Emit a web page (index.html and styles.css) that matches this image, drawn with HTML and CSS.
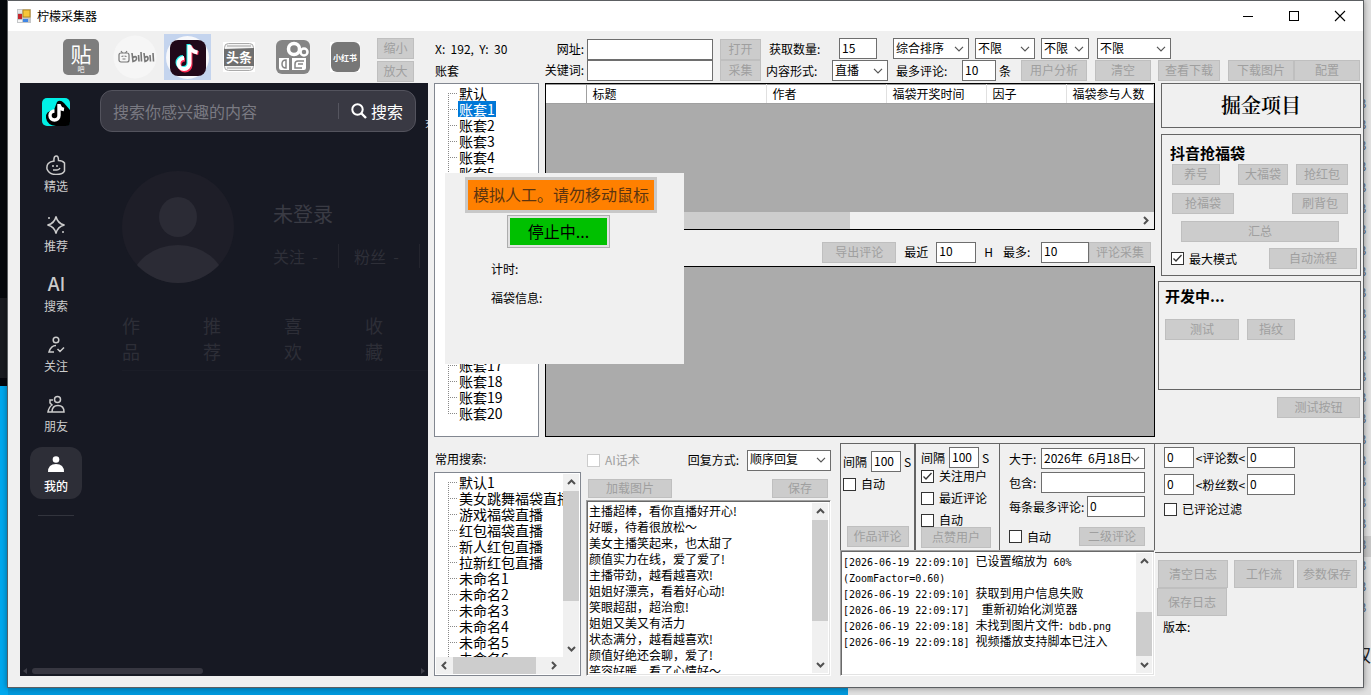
FILE: index.html
```html
<!DOCTYPE html>
<html lang="zh-CN">
<head>
<meta charset="utf-8">
<title>柠檬采集器</title>
<link rel="stylesheet" href="styles.css">
</head>
<body>
<div class="desktop">
  <div class="backdrop" aria-hidden="true">
    <div class="backdrop-list"><span>B</span><span>B</span><span>B</span><span>B</span><span>B</span><span>B</span><span>B</span><span>B</span><span>B</span><span>B</span><span>B</span><span>B</span><span>B</span><span>B</span><span>B</span><span>B</span><span>B</span><span>B</span><span>B</span><span>B</span><span>B</span><span class="picked">B</span><span>B</span><span>B</span><span>B</span></div>
    <span class="backdrop-tail">权</span>
  </div>
  <div class="window">
    <header class="titlebar">
      <svg class="app-icon" width="14" height="14" viewBox="0 0 14 14"><rect x="0" y="0" width="14" height="14" fill="#c4c6c8"/><rect x="6" y="1" width="7" height="7" fill="#f6c63a" stroke="#b98a1a" stroke-width="1"/><rect x="1" y="5" width="4" height="5" fill="#c5262c"/><rect x="6" y="10" width="5" height="3" fill="#3f86e6"/><rect x="1" y="1" width="4" height="3" fill="#e6e6e6"/><rect x="1" y="11" width="4" height="2" fill="#f5f5f5"/></svg>
      <h1 class="title">柠檬采集器</h1>
      <div class="winctl">
        <button aria-label="最小化"><svg width="12" height="12"><path d="M1 6.500h10" stroke="#000"/></svg></button>
        <button aria-label="最大化"><svg width="12" height="12"><rect x="1.500" y="1.500" width="9" height="9" fill="none" stroke="#000"/></svg></button>
        <button aria-label="关闭"><svg width="12" height="12"><path d="M1 1l10 10M11 1L1 11" stroke="#000" stroke-width="1.100"/></svg></button>
      </div>
    </header>
    <div class="client">
      <section class="left">
        <div class="sites">
          <svg class="site-tieba" width="36" height="36" viewBox="0 0 36 36"><rect width="36" height="36" rx="5" fill="#7d7d7d"/><text x="18" y="23" font-size="21" text-anchor="middle" fill="#fff">贴</text><text x="18" y="33" font-size="7" text-anchor="middle" fill="#fff">吧</text></svg>
          <svg class="site-bili" width="44" height="44" viewBox="0 0 44 44"><circle cx="22" cy="22" r="21.500" fill="#f6f6f6"/><g fill="none" stroke="#777" stroke-width="1.200"><rect x="6" y="18" width="10" height="9" rx="2"/><path d="M8 16l1.500 2M14 16l-1.500 2M8.500 21.500l2-.5M13.500 21.500l-2-.5M9.500 24h3"/><path d="M19 18l1 8.500q4-1 3.500-3.500t-3.500-.5M25.500 20l.5 6.500M28 17l.5 9.500M31 18l1 8.500q3.500-1 3-3.500t-3-.5M37 20l.5 6.500M40 18l.5 8.500" stroke-width="1.600"/></g></svg>
          <button class="site-active" aria-label="抖音"><svg width="43" height="43" viewBox="0 0 43 43"><circle cx="21.500" cy="21.500" r="21.500" fill="#f7f8fb"/><rect x="4" y="4" width="36" height="36" rx="8" fill="#21091a"/><g fill="none" stroke-width="4"><path d="M22.500 8v18.500a5.500 5.500 0 1 1-5.500-5.500M22.500 10q2 5 8 6" stroke="#25f4ee"/><path d="M24.500 10v19a5.500 5.500 0 1 1-5.500-5.500M24.500 11q2 5 8 6" stroke="#fe2c55"/><path d="M23.500 9v18.500a5.500 5.500 0 1 1-5.500-5.500M23.500 10.500q2 5 8 6" stroke="#fff"/></g></svg></button>
          <svg class="site-toutiao" width="32" height="30" viewBox="0 0 32 30"><rect width="32" height="30" fill="#fff"/><rect x="1.500" y="1.500" width="29" height="27" rx="4" fill="#f4f4f4" stroke="#aaa"/><path d="M4 4h24M4 26h24" stroke="#bbb" stroke-width="1.500"/><path d="M1 7l30-1v18H1z" fill="#6f6f6f"/><text x="16" y="20" font-size="13" font-weight="700" text-anchor="middle" fill="#fff">头条</text></svg>
          <svg class="site-ks" width="36" height="36" viewBox="0 0 36 36"><rect x="1" y="1" width="34" height="34" rx="6" fill="#858585"/><g fill="none" stroke="#fff"><circle cx="19" cy="10" r="5.500" stroke-width="3.500"/><circle cx="29" cy="13" r="3.500" stroke-width="2.500"/></g><path d="M4 19h10v12H6q-2 0-2-2zM17 19h14v10q0 2-2 2H17z" fill="#fff"/><path d="M11 21q-4 0-4 4t4 4zM29 22h-6q-3 0-3 3v4h7M23 25h5" fill="none" stroke="#858585" stroke-width="1.500"/></svg>
          <svg class="site-xhs" width="30" height="30" viewBox="0 0 30 30"><rect width="30" height="30" fill="#fff"/><rect x="1" width="29" height="30" rx="6" fill="#777"/><text x="15" y="19" font-size="8" font-weight="700" text-anchor="middle" fill="#fff">小红书</text></svg>
          <div class="zoomers"><button class="btn" disabled>缩小</button><button class="btn" disabled>放大</button></div>
        </div>
        <div class="browser">
          <nav class="side">
            <svg class="dy-logo" width="28" height="28" viewBox="0 0 28 28"><rect width="28" height="28" rx="5" fill="#00f0e6"/><path d="M15 4q3-3 7 1l6 7v12q0 4-4 4H14q-9-1-10-8t8-8z" fill="#000"/><path d="M17 6v11.500a4.500 4.500 0 1 1-4.500-4.500M17 7q1 4 5 4.500" fill="none" stroke="#fff" stroke-width="3.400"/></svg>
            <ul class="nav">
              <li><svg width="20" height="20" viewBox="0 0 20 20"><path d="M8 6q-.5-4.500 2-5t2.500 4.500q4 0 6 2.500V16q-1.500 3.500-8.500 3.500T1 14Q0 7 8 6z"/><path d="M7 10v2M11 10v2M7 15h4q2 0 3-2"/></svg>精选</li>
              <li><svg width="20" height="20" viewBox="0 0 20 20"><path d="M10 1.500q1.500 7 8.500 8.500-7 1.500-8.500 8.500Q8.500 11.500 1.500 10 8.500 8.500 10 1.500z"/><path d="M3 2v2M17 16v2"/></svg>推荐</li>
              <li><span class="ai">AI</span>搜索</li>
              <li><svg width="20" height="20" viewBox="0 0 20 20"><circle cx="10" cy="5" r="2.800"/><path d="M10 10.500q-5 0-7 6.500h5M11.500 14l2.500 2.500 4-4"/></svg>关注</li>
              <li><svg width="20" height="20" viewBox="0 0 20 20"><circle cx="11.500" cy="4.500" r="3"/><path d="M6 17q0-6.500 6-6.500t6 6.500zM7 5H4v3l2 2q-3 2-4 7h4"/></svg>朋友</li>
              <li class="on"><svg class="solid" width="20" height="20" viewBox="0 0 20 20"><circle cx="10" cy="4.500" r="3.300"/><path d="M2 17q0-8 8-8t8 8z"/></svg>我的</li>
            </ul>
            <hr class="side-line">
          </nav>
          <div class="page">
            <div class="searchrow">
              <form class="search"><input type="text" aria-label="搜索" placeholder="搜索你感兴趣的内容"><button type="button"><svg width="16" height="16" viewBox="0 0 16 16"><circle cx="6.500" cy="6.500" r="5.200" fill="none" stroke="#fff" stroke-width="2"/><path d="M10.500 10.500l4.500 4.500" stroke="#fff" stroke-width="2.400"/></svg>搜索</button></form>
              <span class="cut">充</span>
            </div>
            <div class="profile">
              <svg width="112" height="112" viewBox="0 0 112 112"><defs><clipPath id="face"><circle cx="56" cy="56" r="56"/></clipPath></defs><g clip-path="url(#face)"><rect width="112" height="112" fill="#1e1e28"/><ellipse cx="56" cy="46" rx="19" ry="20" fill="#2b2b35"/><ellipse cx="56" cy="113" rx="47" ry="39" fill="#2b2b35"/></g></svg>
              <div class="who"><div class="name">未登录</div><div class="stats"><span>关注&nbsp; -</span><span>粉丝&nbsp; -</span></div></div>
            </div>
            <div class="tabs"><span>作品</span><span>推荐</span><span>喜欢</span><span>收藏</span></div>
          </div>
          <div class="darkbar"><svg width="4" height="8"><path d="M4 1v6L0 4z" fill="#3e3e48"/></svg><i></i><svg width="4" height="8"><path d="M0 1v6l4-3z" fill="#3e3e48"/></svg></div>
        </div>
      </section>

      <section class="main">
        <div class="tools">
          <div class="stack tools-pos"><span>X:&nbsp; 192,&nbsp; Y:&nbsp; 30</span><span>账套</span></div>
          <div class="stack tools-lab"><label for="url">网址:</label><label for="kw">关键词:</label></div>
          <div class="stack tools-in"><input id="url" type="text"><input id="kw" type="text"></div>
          <div class="stack tools-go"><button class="btn" disabled>打开</button><button class="btn" disabled>采集</button></div>
          <div class="opts">
            <div class="line">
              <label class="w70 ml3" for="cnt">获取数量:</label><input id="cnt" class="w38" type="text" value="15">
              <select class="w76 ml16" aria-label="排序"><option>综合排序</option></select>
              <select class="w60 ml6" aria-label="时间"><option>不限</option></select>
              <select class="w48 ml6" aria-label="时长"><option>不限</option></select>
              <select class="w74 ml8" aria-label="范围"><option>不限</option></select>
            </div>
            <div class="line second-line">
              <label class="w66" for="kind">内容形式:</label><select id="kind" class="w56"><option>直播</option></select>
              <label class="w66 ml8" for="maxc">最多评论:</label><input id="maxc" class="w34" type="text" value="10"><span class="ml3">条</span>
              <button class="btn w66 ml10" disabled>用户分析</button>
              <button class="btn w56 ml8" disabled>清空</button>
              <button class="btn w62 push" disabled>查看下载</button>
              <button class="btn w66 ml8" disabled>下载图片</button>
              <button class="btn w66" disabled>配置</button>
            </div>
          </div>
        </div>

        <div class="upper">
          <ul class="tree accounts">
            <li><span>默认</span></li><li><span class="sel">账套1</span></li><li><span>账套2</span></li><li><span>账套3</span></li><li><span>账套4</span></li><li><span>账套5</span></li><li class="covered"></li><li><span>账套17</span></li><li><span>账套18</span></li><li><span>账套19</span></li><li><span>账套20</span></li>
          </ul>
          <div class="grids">
            <div class="gridview first">
              <table><colgroup><col class="c1"><col class="c2"><col class="c3"><col class="c4"><col class="c5"><col></colgroup><thead><tr><th></th><th>标题</th><th>作者</th><th>福袋开奖时间</th><th>因子</th><th>福袋参与人数</th></tr></thead></table>
              <div class="hbar"><svg class="arr" viewBox="0 0 9 9"><path d="M6 1L2.500 4.500 6 8"/></svg><div class="rail"><i class="thumb-half"></i></div><svg class="arr" viewBox="0 0 9 9"><path d="M3 1l3.500 3.500L3 8"/></svg></div>
            </div>
            <div class="between">
              <button class="btn w74" disabled>导出评论</button>
              <label class="ml8 w32" for="hrs">最近</label><input id="hrs" class="w40" type="text" value="10"><span class="ml8">H</span>
              <label class="ml10 w38" for="most">最多:</label><input id="most" class="w48" type="text" value="10"><button class="btn w62" disabled>评论采集</button>
            </div>
            <div class="gridview second"></div>
          </div>
          <aside class="right">
            <div class="box banner">掘金项目</div>
            <div class="box bags">
              <h2>抖音抢福袋</h2>
              <div class="spread"><button class="btn w48" disabled>养号</button><button class="btn w50 push" disabled>大福袋</button><button class="btn w52 ml8" disabled>抢红包</button></div>
              <div class="spread"><button class="btn w62" disabled>抢福袋</button><button class="btn w56 push" disabled>刷背包</button></div>
              <button class="btn total" disabled>汇总</button>
              <div class="mode"><label class="chk"><input type="checkbox" checked>最大模式</label><button class="btn w88" disabled>自动流程</button></div>
            </div>
            <div class="box dev">
              <h2>开发中...</h2>
              <div class="spread"><button class="btn w74" disabled>测试</button><button class="btn w48 ml8" disabled>指纹</button></div>
            </div>
            <button class="btn testbtn" disabled>测试按钮</button>
          </aside>
        </div>

        <div class="lower">
          <div class="common">
            <div class="cap">常用搜索:</div>
            <div class="listbox">
              <div class="listrow">
                <ul class="tree"><li><span>默认1</span></li><li><span>美女跳舞福袋直播</span></li><li><span>游戏福袋直播</span></li><li><span>红包福袋直播</span></li><li><span>新人红包直播</span></li><li><span>拉新红包直播</span></li><li><span>未命名1</span></li><li><span>未命名2</span></li><li><span>未命名3</span></li><li><span>未命名4</span></li><li><span>未命名5</span></li><li><span>未命名6</span></li></ul>
                <div class="vbar"><svg class="arr" viewBox="0 0 9 9"><path d="M1 6l3.500-3.500L8 6"/></svg><div class="rail"><i class="t73"></i></div><svg class="arr" viewBox="0 0 9 9"><path d="M1 3l3.500 3.500L8 3"/></svg></div>
              </div>
              <div class="hbar"><svg class="arr" viewBox="0 0 9 9"><path d="M6 1L2.500 4.500 6 8"/></svg><div class="rail"><i class="thumb-most"></i></div><svg class="arr" viewBox="0 0 9 9"><path d="M3 1l3.500 3.500L3 8"/></svg><span class="corner"></span></div>
            </div>
          </div>

          <div class="reply">
            <div class="line replytop"><label class="chk off"><input type="checkbox" disabled>AI话术</label><label class="push" for="how">回复方式:</label><select id="how" class="w84 ml8"><option>顺序回复</option></select></div>
            <div class="replybtns"><button class="btn w84" disabled>加载图片</button><button class="btn w56" disabled>保存</button></div>
            <div class="sunken grow">
              <textarea aria-label="回复内容">主播超棒，看你直播好开心!
好暖，待着很放松～
美女主播笑起来，也太甜了
颜值实力在线，爱了爱了!
主播带劲，越看越喜欢!
姐姐好漂亮，看着好心动!
笑眼超甜，超治愈!
姐姐又美又有活力
状态满分，越看越喜欢!
颜值好绝还会聊，爱了!
笑容好暖，看了心情好～</textarea>
              <div class="vbar"><svg class="arr" viewBox="0 0 9 9"><path d="M1 6l3.500-3.500L8 6"/></svg><div class="rail"><i class="t73"></i></div><svg class="arr" viewBox="0 0 9 9"><path d="M1 3l3.500 3.500L8 3"/></svg></div>
            </div>
          </div>

          <div class="tasks">
            <div class="panels">
              <div class="panel p1">
                <div class="line"><label class="w28" for="g1">间隔</label><input id="g1" class="w30" type="text" value="100"><span class="ml3">S</span></div>
                <label class="chk"><input type="checkbox">自动</label>
                <button class="btn w62 bottom" disabled>作品评论</button>
              </div>
              <div class="panel p2">
                <div class="line"><label class="w28" for="g2">间隔</label><input id="g2" class="w30" type="text" value="100"><span class="ml3">S</span></div>
                <label class="chk"><input type="checkbox" checked>关注用户</label>
                <label class="chk"><input type="checkbox">最近评论</label>
                <label class="chk"><input type="checkbox">自动</label>
                <button class="btn w70" disabled>点赞用户</button>
              </div>
              <div class="panel p3">
                <div class="line"><label class="w32" for="since">大于:</label><select id="since" class="fill"><option>2026年&nbsp; 6月18日</option></select></div>
                <div class="line"><label class="w32" for="has">包含:</label><input id="has" class="fill" type="text"></div>
                <div class="line"><label class="w78" for="each">每条最多评论:</label><input id="each" class="fill" type="text" value="0"></div>
                <div class="line last"><label class="chk"><input type="checkbox">自动</label><button class="btn w66 push" disabled>二级评论</button></div>
              </div>
            </div>
            <div class="sunken grow">
              <div class="log" role="log">
                <p><span class="ts">[2026-06-19 22:09:10] </span>已设置缩放为<span class="ts"> 60% (ZoomFactor=0.60)</span></p>
                <p><span class="ts">[2026-06-19 22:09:10] </span>获取到用户信息失败</p>
                <p><span class="ts">[2026-06-19 22:09:17]&nbsp; </span>重新初始化浏览器</p>
                <p><span class="ts">[2026-06-19 22:09:18] </span>未找到图片文件:<span class="ts"> bdb.png</span></p>
                <p><span class="ts">[2026-06-19 22:09:18] </span>视频播放支持脚本已注入</p>
              </div>
              <div class="vbar"><svg class="arr" viewBox="0 0 9 9"><path d="M1 6l3.500-3.500L8 6"/></svg><div class="rail end"><i class="t50"></i></div><svg class="arr" viewBox="0 0 9 9"><path d="M1 3l3.500 3.500L8 3"/></svg></div>
            </div>
          </div>

          <div class="filters">
            <div class="filterbox">
              <div class="line"><input class="w30" aria-label="评论数下限" type="text" value="0"><span class="w53">&lt;评论数&lt;</span><input class="w48" aria-label="评论数上限" type="text" value="0"></div>
              <div class="line"><input class="w30" aria-label="粉丝数下限" type="text" value="0"><span class="w53">&lt;粉丝数&lt;</span><input class="w48" aria-label="粉丝数上限" type="text" value="0"></div>
              <label class="chk"><input type="checkbox">已评论过滤</label>
            </div>
            <div class="logbtns"><button class="btn w70" disabled>清空日志</button><button class="btn w60 ml6" disabled>工作流</button><button class="btn w60 ml3" disabled>参数保存</button></div>
            <div class="logbtns tight"><button class="btn w70" disabled>保存日志</button></div>
            <div class="version">版本:</div>
          </div>
        </div>

        <div class="popup" role="dialog" aria-label="运行状态">
          <button class="btn-warn" disabled>模拟人工。请勿移动鼠标</button>
          <button class="btn-stop">停止中...</button>
          <p>计时:</p>
          <p>福袋信息:</p>
        </div>
      </section>
    </div>
  </div>
</div>
</body>
</html>
```

FILE: styles.css
```css
* { box-sizing: border-box; }
body { margin: 0; font: 12px/16px "Noto Sans CJK SC", sans-serif; color: #000; }
button, input, select, textarea { font: inherit; color: inherit; margin: 0; border-radius: 0; }
ul, p, h1, h2 { margin: 0; padding: 0; list-style: none; font-size: inherit; font-weight: inherit; }
svg { display: block; flex: none; }
label, .line span { white-space: nowrap; }

/* desktop behind the window */
.desktop {
  position: relative; display: flex; height: 100vh; min-height: 690px; padding: 0 7px 7px; overflow: hidden;
  background:
    linear-gradient(#e0e0e0, #e0e0e0) right top / 523px 100% no-repeat,
    linear-gradient(#06090d 0 298px, #191b20 298px 378px, #04060c 378px 386px, #00a8ee 386px) left top / 8px 100% no-repeat,
    #0098dc;
}
.backdrop { position: absolute; top: 0; right: 0; bottom: 0; width: 12px; font: 12px/21px "Liberation Mono", monospace; color: #5b6f8c; overflow: hidden; }
.backdrop-list { display: flex; flex-direction: column; padding-top: 95px; }
.picked { background: #c6c6c6; }
.backdrop-tail { display: block; margin-top: 22px; margin-left: -6px; font: 18px/24px "Noto Sans CJK SC", sans-serif; color: #222; }
.window { position: relative; flex: 1; min-width: 0; display: flex; flex-direction: column; background: #f0f0f0; border: 1px solid #5c5f62; box-shadow: 0 0 6px rgba(0, 0, 0, .4); }

.titlebar { display: flex; align-items: center; height: 30px; padding-left: 9px; background: #fff; }
.title { flex: 1; margin-left: 6px; }
.winctl { display: flex; }
.winctl button { display: flex; align-items: center; justify-content: center; width: 46px; height: 29px; padding: 0; border: 0; background: none; }

.client { flex: 1; min-height: 0; display: flex; gap: 6px; padding: 0 2px 11px 12px; }
.left { flex: none; width: 408px; display: flex; flex-direction: column; }
.main { position: relative; flex: 1; min-width: 0; display: flex; flex-direction: column; }

/* shared controls */
.btn { flex: none; height: 21px; padding: 0 0 1px; border: 1px solid #bfbfbf; background: #ccc; color: #9f9f9f; line-height: 16px; white-space: nowrap; }
input[type="text"] { height: 21px; min-width: 0; padding: 0 2px 3px; border: 1px solid #6e6e6e; background: #fff; outline: 0; }
select {
  height: 21px; min-width: 0; padding: 0 0 2px 2px; border: 1px solid #6e6e6e; appearance: none; outline: 0;
  background: #fff url("data:image/svg+xml,%3Csvg xmlns='http://www.w3.org/2000/svg' width='10' height='6'%3E%3Cpath d='M1 .8l4 4 4-4' fill='none' stroke='%23555' stroke-width='1.200'/%3E%3C/svg%3E") right 4px center no-repeat;
}
.line { display: flex; align-items: center; }
.line > *, .between > * { flex: none; }
.line > .fill { flex: 1; }
.push { margin-left: auto; }
.chk { display: flex; align-items: center; gap: 5px; }
.chk input { appearance: none; width: 13px; height: 13px; border: 1px solid #333; background: #fff; }
.chk input:checked { background: #fff url("data:image/svg+xml,%3Csvg xmlns='http://www.w3.org/2000/svg' width='11' height='11'%3E%3Cpath d='M1.500 5.500l2.500 2.500 5.500-6' fill='none' stroke='%23333' stroke-width='1.300'/%3E%3C/svg%3E") center no-repeat; }
.chk.off { color: #9f9f9f; }
.chk.off input { border-color: #ccc; }

.w28 { width: 28px; } .w30 { width: 30px; } .w32 { width: 32px; } .w34 { width: 34px; } .w38 { width: 38px; } .w40 { width: 40px; }
.w48 { width: 48px; } .w50 { width: 50px; } .w52 { width: 52px; } .w53 { width: 53px; text-align: center; } .w56 { width: 56px; }
.w60 { width: 60px; } .w62 { width: 62px; } .w66 { width: 66px; } .w70 { width: 70px; } .w74 { width: 74px; } .w76 { width: 76px; }
.w78 { width: 78px; } .w84 { width: 84px; } .w88 { width: 88px; }
.ml3 { margin-left: 3px; } .ml6 { margin-left: 6px; } .ml8 { margin-left: 8px; } .ml10 { margin-left: 10px; } .ml16 { margin-left: 16px; }

/* scrollbars */
.vbar, .hbar { display: flex; flex: none; background: #f0f0f0; }
.vbar { flex-direction: column; width: 16px; }
.hbar { height: 17px; }
.rail { flex: 1; display: flex; flex-direction: inherit; }
.rail.end { justify-content: flex-end; }
.rail i { background: #cdcdcd; }
.arr { width: 17px; height: 17px; padding: 4px; fill: none; stroke: #505050; stroke-width: 2; }
.t73 { height: 74%; }
.t50 { height: 51%; }
.thumb-half { width: 50%; }
.thumb-most { width: 90%; }
.corner { width: 17px; }

/* site launcher */
.sites { display: flex; align-items: center; height: 52px; padding-left: 43px; }
.site-bili { margin-left: 14px; }
.site-active { width: 47px; height: 46px; margin-left: 7px; padding: 2px; border: 0; background: #c4d4ee; }
.site-toutiao { margin-left: 12px; }
.site-ks { margin-left: 20px; }
.site-xhs { margin-left: 19px; }
.zoomers { display: flex; flex-direction: column; gap: 2px; margin: 5px 0 0 17px; }
.zoomers .btn { width: 37px; }

/* embedded browser */
.browser { position: relative; flex: 1; min-height: 0; display: flex; background: #171923; overflow: hidden; color: #ccc; }
.side { width: 72px; flex: none; display: flex; flex-direction: column; align-items: center; padding-top: 15px; }
.nav { display: flex; flex-direction: column; gap: 8px; margin-top: 21px; }
.nav li { display: flex; flex-direction: column; align-items: center; gap: 3px; width: 52px; height: 52px; padding-top: 8px; border-radius: 12px; }
.nav svg { fill: none; stroke: #ccc; stroke-width: 1.5; }
.nav svg.solid { fill: #fff; stroke: none; }
.nav .on { background: #2d2e37; color: #fff; font-weight: 500; }
.ai { font: 500 18px/20px Inter, sans-serif; }
.side-line { width: 36px; margin: 16px 0 0; border: 0; border-top: 1px solid #32343d; }
.page { flex: 1; min-width: 0; padding: 7px 0 0 8px; }
.searchrow { display: flex; align-items: center; gap: 9px; overflow: hidden; }
.search { flex: none; display: flex; align-items: center; width: 316px; height: 42px; padding: 0 12px; border: 1px solid #53535d; border-radius: 12px; background: #393943; font-size: 16px; line-height: 24px; }
.search input[type="text"] { flex: 1; height: 24px; padding: 0; border: 0; background: none; }
.search input::placeholder { color: #7a7a82; opacity: 1; }
.search button { display: flex; align-items: center; gap: 4px; padding: 0 0 0 13px; border: 0; background: linear-gradient(#55555f, #55555f) left center / 1px 16px no-repeat; color: #fff; }
.cut { flex: none; padding-top: 24px; font-size: 10px; line-height: 12px; }
.profile { display: flex; gap: 39px; padding: 39px 0 0 22px; overflow: hidden; }
.who { flex: none; padding-top: 29px; color: #2e2f38; }
.name { font-size: 20px; line-height: 28px; color: #3a3b44; }
.stats { display: flex; gap: 15px; margin-top: 16px; font-size: 16px; line-height: 24px; }
.stats span { width: 66px; border-right: 1px solid #24252e; }
.tabs { display: flex; gap: 63px; margin: 29px 0 0 22px; padding-bottom: 6px; border-bottom: 1px solid #1b1d27; font-size: 18px; line-height: 26px; color: #2d2e37; }
.tabs span { width: 18px; }
.darkbar { position: absolute; left: 3px; right: 3px; bottom: 1px; display: flex; align-items: center; gap: 5px; }
.darkbar i { width: 171px; height: 6px; margin-right: auto; border-radius: 3px; background: #373741; }

/* toolbar */
.tools { display: flex; height: 52px; padding-top: 7px; }
.stack { display: flex; flex-direction: column; flex: none; line-height: 21px; }
.tools-pos { width: 107px; padding-left: 1px; gap: 1px; }
.tools-lab { width: 46px; padding-right: 3px; text-align: right; }
.tools-in { width: 126px; padding-top: 1px; }
.tools-go { width: 41px; margin: 1px 5px 0 7px; }
.opts { flex: 1; min-width: 0; display: flex; flex-direction: column; gap: 1px; }
.opts .line { height: 21px; }
.second-line { padding-right: 1px; }

/* upper half */
.upper { flex: 354 1 0; min-height: 0; display: flex; }
.tree { font-size: 14px; line-height: 16px; background: #fff; overflow: hidden; }
.tree li { display: flex; height: 16px; padding-left: 13px; white-space: nowrap; }
.tree li::before {
  content: ""; flex: none; width: 10px; height: 100%;
  background:
    repeating-linear-gradient(90deg, #888 0 1px, transparent 1px 2px) left center / 10px 1px no-repeat,
    repeating-linear-gradient(#888 0 1px, transparent 1px 2px) left bottom / 1px 100% no-repeat;
}
.tree li:first-child::before { background-size: 10px 1px, 1px 8px; }
.accounts li:last-child::before { background-position: left center, left top; background-size: 10px 1px, 1px 8px; }
.tree .covered { height: 176px; }
.tree span { padding: 0 1px; }
.tree .sel { background: #0078d7; color: #fff; }
.accounts { flex: none; width: 105px; padding-top: 1px; border: 1px solid #828790; }
.grids { flex: 1; min-width: 0; display: flex; flex-direction: column; margin: 0 3px 0 6px; }
.gridview { border: 1px solid #000; background: #ababab; overflow: hidden; }
.first { flex: none; height: 147px; display: flex; flex-direction: column; justify-content: space-between; }
.second { flex: 1; }
.gridview table { width: 100%; table-layout: fixed; border-collapse: collapse; border-top: 1px solid #999; background: #fff; }
.gridview th { height: 19px; padding: 0 0 0 6px; border-right: 1px solid #e0e0e0; border-bottom: 1px solid #a0a0a0; font-weight: 400; text-align: left; white-space: nowrap; }
.gridview th:first-child { border-right-color: #a0a0a0; }
.c1 { width: 40px; } .c2 { width: 180px; } .c3 { width: 120px; } .c4 { width: 100px; } .c5 { width: 80px; }
.between { flex: none; height: 36px; display: flex; align-items: center; justify-content: flex-end; padding: 8px 4px 0 0; }

.right { flex: none; width: 203px; display: flex; flex-direction: column; align-items: flex-end; }
.box { width: 200px; border: 1px solid #646464; flex: none; }
.banner { height: 45px; font: 600 20px/45px "Liberation Serif", "Noto Serif CJK SC", "Noto Sans CJK SC", serif; text-align: center; }
.bags { height: 142px; margin-top: 6px; padding: 8px 3px 0 10px; }
.box h2 { font-size: 15px; font-weight: 700; line-height: 20px; }
.bags h2 { margin: 0 0 1px -2px; }
.spread { display: flex; padding-right: 9px; }
.spread + .spread { margin-top: 8px; }
.total { display: block; width: 158px; margin: 7px 0 0 9px; }
.mode { display: flex; align-items: center; justify-content: space-between; margin-top: 6px; }
.mode .chk { margin-left: -1px; }
.dev { width: 203px; height: 109px; margin-top: 5px; padding: 4px 6px; }
.dev .spread { margin-top: 13px; }
.testbtn { width: 83px; margin: 7px 1px 0 0; }

/* lower half */
.lower { flex: 233 1 0; min-height: 0; display: flex; padding-top: 6px; }
.common { flex: none; width: 147px; display: flex; flex-direction: column; }
.cap { height: 29px; padding: 8px 1px 0; }
.listbox { flex: 1; min-height: 0; display: flex; flex-direction: column; padding: 1px; border: 1px solid #828790; background: #fff; }
.listrow { flex: 1; min-height: 0; display: flex; }
.listrow .tree { flex: 1; min-width: 0; margin-left: -1px; }
.reply { flex: none; width: 245px; display: flex; flex-direction: column; margin: 0 9px 0 5px; }
.replytop { height: 34px; padding-left: 1px; }
.replybtns { display: flex; justify-content: space-between; height: 23px; padding: 2px 3px 0 2px; }
.replybtns .btn { height: 19px; }
.grow { flex: 1; min-height: 0; }
.sunken { display: flex; border: 1px solid; border-color: #a0a0a0 #fff #fff #a0a0a0; box-shadow: inset 1px 1px #696969, inset -1px -1px #e3e3e3; padding: 2px; background: #fff; }
textarea { flex: 1; min-width: 0; padding: 0; border: 0; resize: none; overflow: hidden; background: none; outline: 0; line-height: 16px; }
.tasks { flex: 1; min-width: 0; display: flex; flex-direction: column; }
.panels { flex: none; display: flex; height: 107px; }
.panel { flex: none; display: flex; flex-direction: column; border: 1px solid #646464; border-bottom: 0; }
.bottom { margin: auto 0 3px; align-self: center; }
.p1 { width: 75px; padding: 7px 2px 0; gap: 4px; }
.p2 { width: 85px; padding: 3px 2px 0 5px; gap: 8px; }
.p2 .chk { height: 14px; }
.p2 .line + .chk { margin-top: -7px; }
.p2 .btn { margin-top: -8px; }
.p3 { flex: 1; min-width: 0; padding: 4px 9px 0; gap: 3px; border-left: 0; }
.p3 .last { margin-top: 7px; }
.p3 .last .btn { height: 19px; }
.log { flex: 1; min-width: 0; overflow: hidden; }
.ts { font: 10px/10px "DejaVu Sans Mono", monospace; }
.filters { flex: none; width: 206px; }
.filterbox { height: 110px; display: flex; flex-direction: column; gap: 6px; padding: 3px 9px 0; border: 1px solid #646464; border-left: 0; }
.logbtns { display: flex; padding: 7px 3px 0; }
.logbtns .btn { height: 28px; }
.logbtns.tight { padding-top: 0; padding-left: 2px; }
.version { padding: 3px 8px; }

/* status popup */
.popup { position: absolute; left: 11px; top: 142px; width: 239px; height: 191px; padding: 4px 20px 0; background: #f0f0f0; }
.popup button { display: block; padding: 0 0 2px; font-size: 16px; line-height: 24px; white-space: nowrap; }
.btn-warn { width: 192px; height: 36px; border: 3px solid #c8c8c8; background: #ff8000; color: #5c3410; }
.btn-stop { width: 103px; height: 33px; margin: 2px 0 0 42px; border: 1px solid #adadad; outline: 2px solid #e1e1e1; outline-offset: -3px; background: #00c000; }
.popup p { margin: 13px 0 0 26px; line-height: 16px; }
```
